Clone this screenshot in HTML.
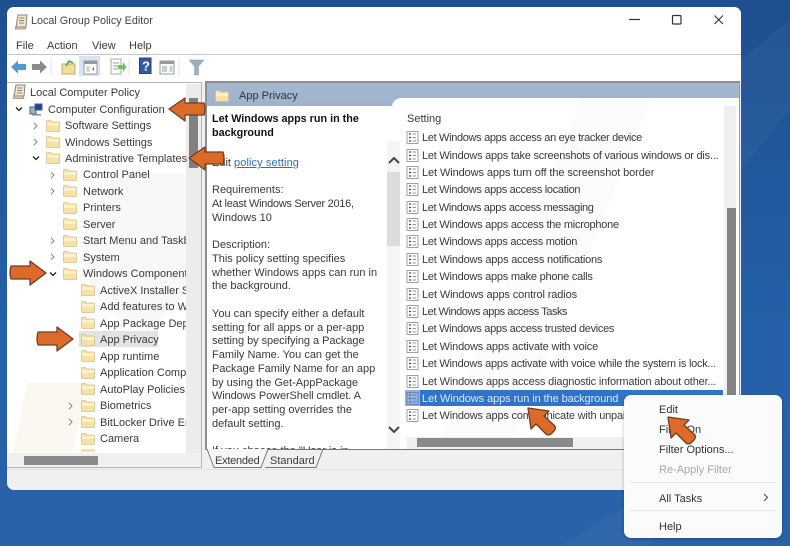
<!DOCTYPE html>
<html><head><meta charset="utf-8"><style>
html,body{margin:0;padding:0}
body{width:790px;height:546px;overflow:hidden;position:relative;background:linear-gradient(#1e4f8f,#2560a8 60%,#2a62a8);font-family:"Liberation Sans",sans-serif;font-size:11px;color:#333}
#w{left:0;top:0;width:790px;height:546px;filter:blur(.35px)}
div{position:absolute}
.t{white-space:nowrap;line-height:14px;height:14px;color:#3a3a3a;overflow:hidden}
.d{white-space:nowrap;line-height:14px;left:212px;color:#3a3a3a}
svg{position:absolute;overflow:visible}
.m{left:659px;white-space:nowrap;line-height:14px;color:#333;font-size:11px}
</style></head><body>
<svg width="0" height="0" style="position:absolute"><defs>
<symbol id="f" viewBox="0 0 14 13"><path d="M.5 2.500q0-1 1-1h3l1 1.500h7q1 0 1 1v7.500q0 1-1 1h-11q-1 0-1-1z" fill="#f5e2a4" stroke="#d6c08c" stroke-width=".8"/><path d="M1 4h12v3H1z" fill="#fcf1c8"/></symbol>
<symbol id="p" viewBox="0 0 13 13"><rect x="1" y=".5" width="11" height="12" fill="#fff" stroke="#a0a0a0"/><path d="M3 3h2M3 6.500h2M3 10h2" stroke="#444" stroke-width="1.200"/><path d="M6.500 3H10M6.500 6.500H10M6.500 10H10" stroke="#999"/></symbol>
</defs></svg>
<div id="w">
<!-- desktop watermark -->
<svg style="left:0;top:0" width="790" height="546"><path d="M741 60l49-40v90l-49 60zM560 546l90-56h60l-60 56z" fill="#fff" opacity=".03"/></svg>

<!-- window -->
<div style="left:7px;top:7px;width:734px;height:483px;background:#f0f0f0;border-radius:7px;overflow:hidden">
<div style="left:0;top:0;width:734px;height:47px;background:#fff"></div>
<div style="left:0;top:47px;width:734px;height:1px;background:#c4c4c4"></div>
<div style="left:0;top:48px;width:734px;height:27px;background:#fff"></div>
</div>

<!-- title -->
<svg style="left:14px;top:14px" width="15" height="16" viewBox="0 0 15 16"><path d="M4 1h9l-1 12H2z" fill="#efe6cf" stroke="#8c8271"/><path d="M5.500 4h5M5 6.500h5M5 9h5" stroke="#8c8271"/><path d="M1.500 13h10v2h-10z" fill="#d9ccae" stroke="#8c8271" stroke-width=".7"/></svg>
<div class="t" style="left:31px;top:14px;font-size:10.8px;color:#444">Local Group Policy Editor</div>
<div class="t" style="left:16px;top:39px">File</div>
<div class="t" style="left:47px;top:39px">Action</div>
<div class="t" style="left:92px;top:39px">View</div>
<div class="t" style="left:129px;top:39px">Help</div>
<svg style="left:620px;top:10px" width="110" height="20" fill="none" stroke="#333"><path d="M9 9.500H20" stroke-width="1.200"/><rect x="52.500" y="5.500" width="8.500" height="8.500" stroke-width="1.200" rx="1"/><path d="M94.500 5.500l8.500 8.500M103 5.500l-8.500 8.500" stroke-width="1.100"/></svg>

<!-- toolbar -->
<div style="left:79px;top:56px;width:21px;height:20px;background:#d5e5f5"></div>
<svg style="left:10px;top:58px" width="200" height="18" viewBox="0 0 200 18">
<path d="M1 9l7-6.500V6h8v6H8v3.500z" fill="#4f9ad6"/>
<path d="M37 9l-7-6.500V6h-8v6h8v3.500z" fill="#8b8b8b"/>
<path d="M41 0v17M169 0v17M119 0v17" stroke="#e2e2e2"/>
<path d="M52 6h13v10H52z" fill="#f2dc9c" stroke="#c2ab73"/><path d="M56 8l3-5 4 2" fill="none" stroke="#5da854" stroke-width="1.800"/>
<rect x="74" y="3" width="13" height="13" fill="#fff" stroke="#999"/><rect x="74" y="3" width="13" height="3" fill="#999"/><path d="M76 8h4v6h-4z" fill="#cfe0cf"/><path d="M84 9l-2 2 2 2z" fill="#3f9a3a"/>
<path d="M101 1h10v15h-10z" fill="#fff" stroke="#b0a898"/><path d="M103 5h6M103 8h6M103 11h5" stroke="#999"/><path d="M108 7h5V4l3.500 5-3.500 5v-3h-5z" fill="#6fbf63"/>
<rect x="129.500" y="0" width="11.500" height="15.500" fill="#3558a8" stroke="#23407f"/><text x="132" y="12.500" font-family="Liberation Sans" font-size="13" font-weight="bold" fill="#fff">?</text>
<rect x="150" y="3" width="14" height="13" fill="#fff" stroke="#999"/><rect x="150" y="3" width="14" height="3" fill="#999"/><path d="M152 8h5v6h-5z" fill="#bcd9bc"/><path d="M159.500 8h3v6h-3z" fill="#ccc"/>
<path d="M179 2h15l-5.500 6.500v8.500h-4V8.500z" fill="#9ab0c0" stroke="#8c9dab" stroke-width=".5"/>
</svg>

<!-- left tree pane -->
<div style="left:7px;top:82px;width:195px;height:386px;background:#fff;border:1px solid #b5b5b5;border-left:0;box-sizing:border-box;overflow:hidden">
<svg style="left:50px;top:90px" width="140" height="280"><path d="M60 0C20 50 0 120 90 160L130 120V0z" fill="#f8f8f8"/><path d="M-30 210h60l-20 100h-60z" fill="#fdf7f2"/></svg>
<div style="left:179px;top:1px;width:15px;height:370px;background:#ececec"></div>
<div style="left:182px;top:15px;width:9px;height:70px;background:#808080"></div>
<div style="left:0;top:370px;width:194px;height:15px;background:#f0f0f0"></div>
<div style="left:17px;top:373px;width:74px;height:9px;background:#8a8a8a"></div>
</div>
<svg style="left:12px;top:84px" width="14" height="16" viewBox="0 0 14 16"><path d="M4 1h9l-1 11H2z" fill="#efe6cf" stroke="#8c8271"/><path d="M5.500 4h5M5 6.500h5M5 9h5" stroke="#8c8271"/><path d="M1.500 12h10v2.500h-10z" fill="#d9ccae" stroke="#8c8271" stroke-width=".7"/></svg>
<div class="t" style="left:30px;top:86px">Local Computer Policy</div>
<svg style="left:29px;top:102px" width="15" height="14" viewBox="0 0 15 14"><path d="M1 5h6v7H1z" fill="#9fb3cc" stroke="#4a5f86"/><path d="M6 2h7v6H6z" fill="#27408f" stroke="#4a5f86"/><path d="M3 12h9v1.500H3z" fill="#7a8aa5"/></svg>
<div class="t" style="left:48px;top:103px">Computer Configuration</div>

<svg style="left:0;top:0" width="210" height="460" fill="none" stroke="#555" stroke-width="1.100">
<path d="M16 107.500l3 3 3-3M33 156.500l3 3 3-3" stroke="#222" stroke-width="1.300"/>
<path d="M50 272.500l3 3 3-3" stroke="#222" stroke-width="1.300"/>
<path d="M34 123l3 3-3 3M34 139l3 3-3 3M51 172l3 3-3 3M51 188l3 3-3 3M51 238l3 3-3 3M51 254l3 3-3 3M69 403l3 3-3 3M69 419l3 3-3 3" stroke="#888"/>
</svg>

<svg width="14" height="13" style="left:46px;top:119px"><use href="#f"/></svg><div class="t" style="left:65px;top:119px">Software Settings</div>
<svg width="14" height="13" style="left:46px;top:135px"><use href="#f"/></svg><div class="t" style="left:65px;top:136px">Windows Settings</div>
<svg width="14" height="13" style="left:46px;top:151px"><use href="#f"/></svg><div class="t" style="left:65px;top:152px">Administrative Templates</div>
<svg width="14" height="13" style="left:63px;top:168px"><use href="#f"/></svg><div class="t" style="left:83px;top:168px">Control Panel</div>
<svg width="14" height="13" style="left:63px;top:184px"><use href="#f"/></svg><div class="t" style="left:83px;top:185px">Network</div>
<svg width="14" height="13" style="left:63px;top:201px"><use href="#f"/></svg><div class="t" style="left:83px;top:201px">Printers</div>
<svg width="14" height="13" style="left:63px;top:217px"><use href="#f"/></svg><div class="t" style="left:83px;top:218px">Server</div>
<svg width="14" height="13" style="left:63px;top:234px"><use href="#f"/></svg><div class="t" style="left:83px;top:234px;width:103px">Start Menu and Taskbar</div>
<svg width="14" height="13" style="left:63px;top:250px"><use href="#f"/></svg><div class="t" style="left:83px;top:251px">System</div>
<svg width="14" height="13" style="left:63px;top:267px"><use href="#f"/></svg><div class="t" style="left:83px;top:267px;width:103px">Windows Components</div>
<svg width="14" height="13" style="left:81px;top:283px"><use href="#f"/></svg><div class="t" style="left:100px;top:284px;width:86px">ActiveX Installer Service</div>
<svg width="14" height="13" style="left:81px;top:300px"><use href="#f"/></svg><div class="t" style="left:100px;top:300px;width:86px">Add features to Windows</div>
<svg width="14" height="13" style="left:81px;top:316px"><use href="#f"/></svg><div class="t" style="left:100px;top:317px;width:86px">App Package Deployment</div>
<div style="left:79px;top:331px;width:79px;height:16px;background:#e3e3e3"></div>
<svg width="14" height="13" style="left:81px;top:333px"><use href="#f"/></svg><div class="t" style="left:100px;top:333px">App Privacy</div>
<svg width="14" height="13" style="left:81px;top:349px"><use href="#f"/></svg><div class="t" style="left:100px;top:350px">App runtime</div>
<svg width="14" height="13" style="left:81px;top:366px"><use href="#f"/></svg><div class="t" style="left:100px;top:366px;width:86px">Application Compatibility</div>
<svg width="14" height="13" style="left:81px;top:382px"><use href="#f"/></svg><div class="t" style="left:100px;top:383px">AutoPlay Policies</div>
<svg width="14" height="13" style="left:81px;top:399px"><use href="#f"/></svg><div class="t" style="left:100px;top:399px">Biometrics</div>
<svg width="14" height="13" style="left:81px;top:415px"><use href="#f"/></svg><div class="t" style="left:100px;top:416px;width:86px">BitLocker Drive Encryption</div>
<svg width="14" height="13" style="left:81px;top:432px"><use href="#f"/></svg><div class="t" style="left:100px;top:432px">Camera</div>
<div style="left:81px;top:449px;width:14px;height:3px;background:#f5e2a4"></div>

<!-- right pane -->
<div style="left:205px;top:81px;width:535px;height:369px;background:#fff;border:2px solid #8f8f8f;border-right:1px solid #8f9db0;border-bottom:1px solid #777;box-sizing:border-box;overflow:hidden">
<div style="left:0;top:0;width:533px;height:23px;background:linear-gradient(#a4b8d2,#9fb2cc)"></div>
<div style="left:185px;top:15px;width:348px;height:356px;background:#fff;border-radius:9px 0 0 0"></div>
<svg style="left:185px;top:15px" width="340" height="340"><path d="M50 340L190 0h70L120 340z" fill="#fbfbfb"/></svg>
<div style="left:180px;top:58px;width:13px;height:310px;background:#f5f5f5"></div>
<div style="left:180px;top:89px;width:13px;height:74px;background:#dcdcdc"></div>
<div style="left:517px;top:23px;width:12px;height:331px;background:#efefef"></div>
<div style="left:520px;top:125px;width:9px;height:190px;background:#848484"></div>
<div style="left:200px;top:354px;width:329px;height:12px;background:#f0f0f0"></div>
<div style="left:210px;top:355px;width:156px;height:9px;background:#8a8a8a"></div>
</div>
<svg width="14" height="13" style="left:215px;top:89px"><use href="#f"/></svg>
<div class="t" style="left:239px;top:89px;color:#333">App Privacy</div>

<div class="d" style="top:112px;font-weight:bold;color:#111;font-size:10.8px">Let Windows apps run in the</div>
<div class="d" style="top:126px;font-weight:bold;color:#111;font-size:10.8px">background</div>
<div class="d" style="top:156px">Edit <span style="color:#2f6cc0;text-decoration:underline;letter-spacing:.1px">policy setting </span></div>
<div class="d" style="top:183px">Requirements:</div>
<div class="d" style="top:197px;letter-spacing:-.3px">At least Windows Server 2016,</div>
<div class="d" style="top:211px">Windows 10</div>
<div class="d" style="top:238px">Description:</div>
<div class="d" style="top:252px">This policy setting specifies</div>
<div class="d" style="top:266px">whether Windows apps can run in</div>
<div class="d" style="top:279px">the background.</div>
<div class="d" style="top:307px">You can specify either a default</div>
<div class="d" style="top:321px">setting for all apps or a per-app</div>
<div class="d" style="top:334px;letter-spacing:-.05px">setting by specifying a Package</div>
<div class="d" style="top:348px">Family Name. You can get the</div>
<div class="d" style="top:362px">Package Family Name for an app</div>
<div class="d" style="top:376px">by using the Get-AppPackage</div>
<div class="d" style="top:389px;letter-spacing:-.1px">Windows PowerShell cmdlet. A</div>
<div class="d" style="top:403px">per-app setting overrides the</div>
<div class="d" style="top:417px">default setting.</div>
<div class="d" style="top:444px;height:5px;overflow:hidden">If you choose the "User is in</div>
<svg style="left:387px;top:155px" width="14" height="280" fill="none" stroke="#444" stroke-width="2"><path d="M2 8l5-5 5 5M2 272l5 5 5-5"/></svg>

<div class="t" style="left:407px;top:112px">Setting</div>
<div style="left:420px;top:390px;width:303px;height:16px;background:#2f74c8"></div>
<svg width="13" height="13" style="left:406px;top:131px"><use href="#p"/></svg><div class="t" style="left:422px;top:131px;letter-spacing:-.33px">Let Windows apps access an eye tracker device</div>
<svg width="13" height="13" style="left:406px;top:149px"><use href="#p"/></svg><div class="t" style="left:422px;top:149px;letter-spacing:-.24px">Let Windows apps take screenshots of various windows or dis...</div>
<svg width="13" height="13" style="left:406px;top:166px"><use href="#p"/></svg><div class="t" style="left:422px;top:166px;letter-spacing:-.1px">Let Windows apps turn off the screenshot border</div>
<svg width="13" height="13" style="left:406px;top:183px"><use href="#p"/></svg><div class="t" style="left:422px;top:183px;letter-spacing:-.31px">Let Windows apps access location</div>
<svg width="13" height="13" style="left:406px;top:201px"><use href="#p"/></svg><div class="t" style="left:422px;top:201px;letter-spacing:-.36px">Let Windows apps access messaging</div>
<svg width="13" height="13" style="left:406px;top:218px"><use href="#p"/></svg><div class="t" style="left:422px;top:218px;letter-spacing:-.24px">Let Windows apps access the microphone</div>
<svg width="13" height="13" style="left:406px;top:235px"><use href="#p"/></svg><div class="t" style="left:422px;top:235px;letter-spacing:-.27px">Let Windows apps access motion</div>
<svg width="13" height="13" style="left:406px;top:253px"><use href="#p"/></svg><div class="t" style="left:422px;top:253px;letter-spacing:-.22px">Let Windows apps access notifications</div>
<svg width="13" height="13" style="left:406px;top:270px"><use href="#p"/></svg><div class="t" style="left:422px;top:270px;letter-spacing:-.24px">Let Windows apps make phone calls</div>
<svg width="13" height="13" style="left:406px;top:288px"><use href="#p"/></svg><div class="t" style="left:422px;top:288px;letter-spacing:-.13px">Let Windows apps control radios</div>
<svg width="13" height="13" style="left:406px;top:305px"><use href="#p"/></svg><div class="t" style="left:422px;top:305px;letter-spacing:-.45px">Let Windows apps access Tasks</div>
<svg width="13" height="13" style="left:406px;top:322px"><use href="#p"/></svg><div class="t" style="left:422px;top:322px;letter-spacing:-.31px">Let Windows apps access trusted devices</div>
<svg width="13" height="13" style="left:406px;top:340px"><use href="#p"/></svg><div class="t" style="left:422px;top:340px;letter-spacing:-.17px">Let Windows apps activate with voice</div>
<svg width="13" height="13" style="left:406px;top:357px"><use href="#p"/></svg><div class="t" style="left:422px;top:357px;letter-spacing:-.24px">Let Windows apps activate with voice while the system is lock...</div>
<svg width="13" height="13" style="left:406px;top:375px"><use href="#p"/></svg><div class="t" style="left:422px;top:375px;letter-spacing:-.17px">Let Windows apps access diagnostic information about other...</div>
<svg width="13" height="13" style="left:406px;top:392px"><use href="#p"/></svg>
<div style="left:405px;top:390px;width:15px;height:16px;background:rgba(70,120,200,.6)"></div>
<div class="t" style="left:422px;top:392px;color:#dbe8fa;letter-spacing:-.08px">Let Windows apps run in the background</div>
<svg width="13" height="13" style="left:406px;top:409px"><use href="#p"/></svg><div class="t" style="left:422px;top:409px;letter-spacing:-.2px">Let Windows apps communicate with unpaired devices</div>

<!-- tabs -->
<svg style="left:205px;top:449px" width="130" height="20" fill="#f6f6f6" stroke="#777"><path d="M2 0l7 18.500h47l7-18.500"/><path d="M60 18.500h51l7-18.500" fill="none"/></svg>
<div class="t" style="left:215px;top:454px;letter-spacing:-.25px">Extended</div>
<div class="t" style="left:270px;top:454px">Standard</div>
<div style="left:7px;top:469px;width:734px;height:1px;background:#e2e2e2"></div>

<!-- context menu -->
<div style="left:624px;top:395px;width:158px;height:143px;background:#fbfbfb;border-radius:7px;box-shadow:0 1px 3px rgba(0,0,0,.25)"></div>
<div class="m" style="top:403px">Edit</div>
<div class="m" style="top:423px">Filter On</div>
<div class="m" style="top:443px">Filter Options...</div>
<div class="m" style="top:463px;color:#a8a8a8">Re-Apply Filter</div>
<div style="left:630px;top:482px;width:146px;height:1px;background:#e6e6e6"></div>
<div class="m" style="top:492px">All Tasks</div>
<svg style="left:763px;top:493px" width="6" height="9" fill="none" stroke="#444"><path d="M1 1l3.500 3.500L1 8"/></svg>
<div style="left:630px;top:510px;width:146px;height:1px;background:#e6e6e6"></div>
<div class="m" style="top:520px">Help</div>

<!-- arrows -->
<svg style="left:0;top:0" width="790" height="546">
<g fill="#dd6a28" stroke="#6d3f22" stroke-width="1.300" stroke-linejoin="round">
<path d="M169 109l16-11v5h19q2 6 0 12h-19v6z"/>
<path d="M189 158l16-11v5h18q2 6 0 12h-18v6z"/>
<path d="M46 273l-16-12v5H11q-2 7 0 13h19v6z"/>
<path d="M73 339l-16-12v5H38q-2 7 0 13h19v6z"/>
<path d="M528 408l21 3-5 5 11 10q1 3-1 5l-3 3q-3 2-5 0l-10-10-5 5z"/>
<path d="M668 417l21 3-5 5 11 10q1 3-1 5l-3 3q-3 2-5 0l-10-10-5 5z"/>
</g></svg>
</div>
</body></html>
